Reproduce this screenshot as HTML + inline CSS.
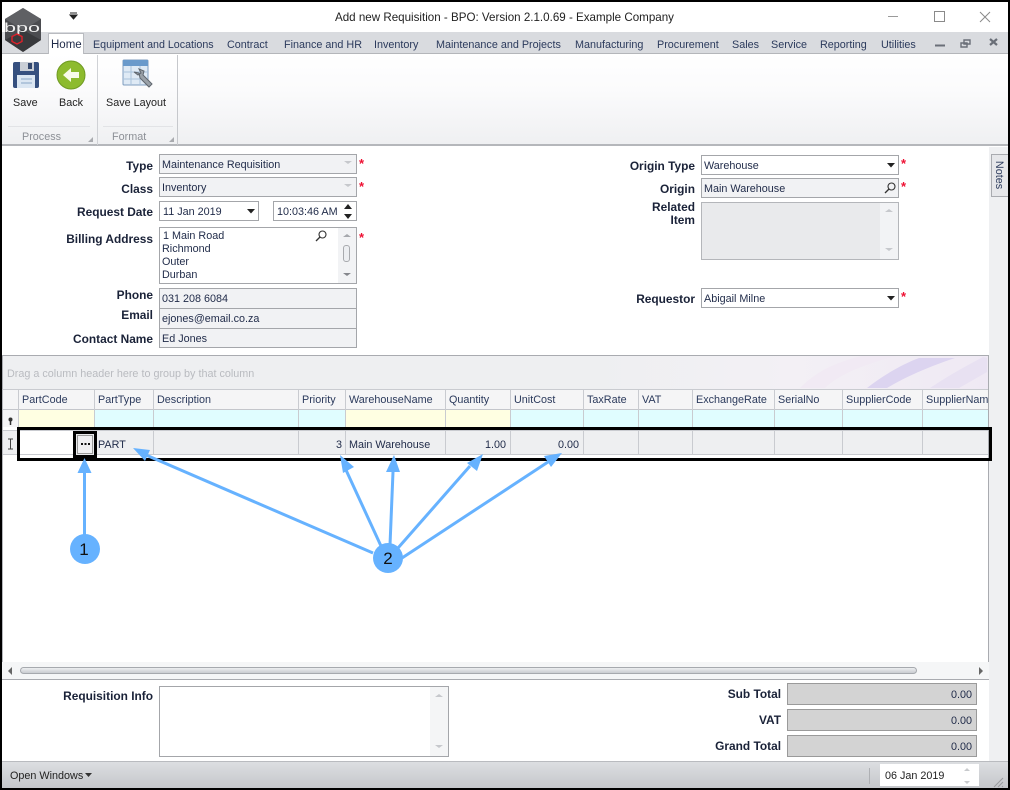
<!DOCTYPE html>
<html><head><meta charset="utf-8"><style>
html,body{margin:0;padding:0;background:#fff}
#p{position:relative;width:1010px;height:790px;overflow:hidden;background:#fff;font-family:"Liberation Sans",sans-serif;font-size:10.8px;color:#1f2a48}
#p div,#p span{position:absolute;box-sizing:border-box}
#p span{white-space:nowrap;line-height:14px;margin-top:1px}
.b{font-weight:bold;color:#1a2238;font-size:11.9px}
.r{text-align:right}
.f{border:1px solid #a4a6aa;background:#f1f2f4}
.w{background:#fff}
#p span.st{color:#ee1133;font-weight:bold;font-size:13px;margin-top:0}
.h{color:#2b3a5c}
.g{color:#8d9096}
.vl{top:389px;width:1px;background:#c9cbd0;height:66px}
svg{position:absolute;left:0;top:0}
</style></head><body><div id="p">
<div style="left:0;top:32px;width:1010px;height:22px;background:#d9dbdf;border-bottom:1px solid #b4b6ba"></div>
<div style="left:48px;top:33px;width:36px;height:22px;background:#fff;border:1px solid #b9bbc0;border-bottom:none"></div>
<div style="left:0;top:54px;width:1010px;height:92px;background:linear-gradient(#fff,#fbfbfc 40%,#eff0f2);border-bottom:2px solid #b5b7bb"></div>
<div style="left:97px;top:55px;width:1px;height:90px;background:#d0d2d6"></div>
<div style="left:177px;top:55px;width:1px;height:90px;background:#c6c8cc"></div>
<div style="left:8px;top:126px;width:82px;height:1px;background:#e2e3e6"></div>
<div style="left:103px;top:126px;width:70px;height:1px;background:#e2e3e6"></div>
<div style="left:989px;top:147px;width:20px;height:615px;background:#eff0f2"></div>
<div style="left:991px;top:154px;width:17px;height:43px;background:#e6e7ea;border:1px solid #a9abb0;border-right:none"></div>
<span style="left:976px;top:167px;transform:rotate(90deg);width:46px;text-align:center;color:#2b3a5c">Notes</span>

<span style="left:335px;top:10px;font-size:11.6px;color:#222">Add new Requisition - BPO: Version 2.1.0.69 - Example Company</span>
<span style="left:51px;top:37px;color:#1f2a48;font-size:11.5px">Home</span>
<span class="h" style="left:93px;top:37px;font-size:10.7px">Equipment and Locations</span>
<span class="h" style="left:227px;top:37px">Contract</span>
<span class="h" style="left:284px;top:37px">Finance and HR</span>
<span class="h" style="left:374px;top:37px">Inventory</span>
<span class="h" style="left:436px;top:37px">Maintenance and Projects</span>
<span class="h" style="left:575px;top:37px">Manufacturing</span>
<span class="h" style="left:657px;top:37px">Procurement</span>
<span class="h" style="left:732px;top:37px">Sales</span>
<span class="h" style="left:771px;top:37px">Service</span>
<span class="h" style="left:820px;top:37px">Reporting</span>
<span class="h" style="left:881px;top:37px">Utilities</span>

<span style="left:13px;top:95px;color:#222">Save</span>
<span style="left:59px;top:95px;color:#222">Back</span>
<span style="left:106px;top:95px;color:#222">Save Layout</span>
<span class="g" style="left:22px;top:129px">Process</span>
<span class="g" style="left:112px;top:129px">Format</span>

<span class="b r" style="right:857px;top:158px">Type</span>
<span class="b r" style="right:857px;top:181px">Class</span>
<span class="b r" style="right:857px;top:204px">Request Date</span>
<span class="b r" style="right:857px;top:231px">Billing Address</span>
<span class="b r" style="right:857px;top:287px">Phone</span>
<span class="b r" style="right:857px;top:307px">Email</span>
<span class="b r" style="right:857px;top:331px">Contact Name</span>

<div class="f" style="left:159px;top:154px;width:198px;height:20px"></div>
<span style="left:162px;top:157px">Maintenance Requisition</span>
<div class="f" style="left:159px;top:177px;width:198px;height:20px"></div>
<span style="left:162px;top:180px">Inventory</span>
<div class="f w" style="left:159px;top:201px;width:100px;height:20px"></div>
<span style="left:163px;top:204px">11 Jan 2019</span>
<div class="f w" style="left:273px;top:201px;width:84px;height:20px"></div>
<span style="left:277px;top:204px">10:03:46 AM</span>
<div style="left:337px;top:203px;width:19px;height:17px;background:#fff"></div>
<div class="f w" style="left:159px;top:227px;width:198px;height:57px"></div>
<div style="left:338px;top:228px;width:18px;height:55px;background:#f2f3f5"></div>
<span style="left:163px;top:229px;line-height:13px">1 Main Road</span>
<span style="left:162px;top:242px;line-height:13px">Richmond</span>
<span style="left:162px;top:255px;line-height:13px">Outer</span>
<span style="left:162px;top:268px;line-height:13px">Durban</span>
<div class="f" style="left:159px;top:288px;width:198px;height:21px"></div>
<span style="left:162px;top:291px">031 208 6084</span>
<div class="f" style="left:159px;top:308px;width:198px;height:21px"></div>
<span style="left:162px;top:311px">ejones@email.co.za</span>
<div class="f" style="left:159px;top:328px;width:198px;height:20px"></div>
<span style="left:162px;top:331px">Ed Jones</span>
<div style="left:343px;top:245px;width:7px;height:17px;border:1px solid #a8aaae;border-radius:3px;background:#eceef1"></div>

<span class="st" style="left:359px;top:157px">*</span>
<span class="st" style="left:359px;top:180px">*</span>
<span class="st" style="left:359px;top:231px">*</span>
<span class="st" style="left:901px;top:157px">*</span>
<span class="st" style="left:901px;top:180px">*</span>
<span class="st" style="left:901px;top:290px">*</span>

<span class="b r" style="right:315px;top:158px">Origin Type</span>
<span class="b r" style="right:315px;top:181px">Origin</span>
<span class="b r" style="right:315px;top:199px">Related</span>
<span class="b r" style="right:315px;top:212px">Item</span>
<span class="b r" style="right:315px;top:291px">Requestor</span>
<div class="f w" style="left:701px;top:155px;width:198px;height:20px"></div>
<span style="left:704px;top:158px">Warehouse</span>
<div class="f" style="left:701px;top:178px;width:198px;height:20px"></div>
<span style="left:704px;top:181px">Main Warehouse</span>
<div style="left:701px;top:202px;width:198px;height:58px;background:#e9eaec;border:1px solid #b4b6ba"></div>
<div style="left:880px;top:203px;width:18px;height:56px;background:#f2f3f5"></div>
<div class="f w" style="left:701px;top:288px;width:198px;height:20px"></div>
<span style="left:704px;top:291px">Abigail Milne</span>

<div style="left:2px;top:355px;width:987px;height:34px;background:linear-gradient(90deg,#eeeff1 0,#eeeff1 60%,#f3f0f5 80%,#efe9f4 100%);border:1px solid #a9abb0;border-bottom:none"></div>
<span style="left:7px;top:366px;color:#b9bbc0">Drag a column header here to group by that column</span>
<div style="left:2px;top:389px;width:987px;height:21px;background:#f5f5f6;border-top:1px solid #c9cbd0;border-bottom:1px solid #c4c6cb"></div>
<div style="left:18px;top:410px;width:76px;height:17px;background:#ffffe2"></div>
<div style="left:94px;top:410px;width:895px;height:17px;background:#e0fdff"></div>
<div style="left:345px;top:410px;width:100px;height:17px;background:#ffffe2"></div>
<div style="left:445px;top:410px;width:65px;height:17px;background:#ffffe2"></div>
<div style="left:2px;top:410px;width:16px;height:17px;background:#f5f5f6"></div>
<div style="left:2px;top:430px;width:987px;height:25px;background:#eeeff1;border-top:1px solid #c9cbd0;border-bottom:1px solid #c9cbd0"></div>
<div style="left:18px;top:431px;width:59px;height:23px;background:#fff"></div>
<div class="vl" style="left:18px"></div><div class="vl" style="left:94px"></div><div class="vl" style="left:153px"></div><div class="vl" style="left:298px"></div><div class="vl" style="left:345px"></div><div class="vl" style="left:445px"></div><div class="vl" style="left:510px"></div><div class="vl" style="left:583px"></div><div class="vl" style="left:638px"></div><div class="vl" style="left:692px"></div><div class="vl" style="left:774px"></div><div class="vl" style="left:842px"></div><div class="vl" style="left:922px"></div>
<span class="h" style="left:22px;top:392px">PartCode</span>
<span class="h" style="left:98px;top:392px">PartType</span>
<span class="h" style="left:157px;top:392px">Description</span>
<span class="h" style="left:302px;top:392px">Priority</span>
<span class="h" style="left:349px;top:392px">WarehouseName</span>
<span class="h" style="left:449px;top:392px">Quantity</span>
<span class="h" style="left:514px;top:392px">UnitCost</span>
<span class="h" style="left:587px;top:392px">TaxRate</span>
<span class="h" style="left:642px;top:392px">VAT</span>
<span class="h" style="left:696px;top:392px">ExchangeRate</span>
<span class="h" style="left:778px;top:392px">SerialNo</span>
<span class="h" style="left:846px;top:392px">SupplierCode</span>
<div style="left:923px;top:390px;width:65px;height:19px;overflow:hidden"><span class="h" style="left:3px;top:2px">SupplierName</span></div>
<span style="left:98px;top:437px">PART</span>
<span class="r" style="right:668px;top:437px">3</span>
<span style="left:349px;top:437px">Main Warehouse</span>
<span class="r" style="right:504px;top:437px">1.00</span>
<span class="r" style="right:431px;top:437px">0.00</span>
<div style="left:988px;top:389px;width:1px;height:291px;background:#a9abb0"></div>
<div style="left:2px;top:389px;width:1px;height:291px;background:#b5b7bb"></div>

<div style="left:2px;top:662px;width:987px;height:18px;background:#f5f6f7;border-bottom:1px solid #a9abb0"></div>
<div style="left:20px;top:667px;width:897px;height:7px;background:linear-gradient(#eceef0,#c9ccd1);border:1px solid #a6a9ae;border-radius:4px"></div>

<span class="b r" style="right:857px;top:688px">Requisition Info</span>
<div class="f w" style="left:159px;top:686px;width:290px;height:71px"></div>
<div style="left:430px;top:687px;width:18px;height:69px;background:#f4f5f6"></div>
<span class="b r" style="right:229px;top:686px">Sub Total</span>
<span class="b r" style="right:229px;top:712px">VAT</span>
<span class="b r" style="right:229px;top:738px">Grand Total</span>
<div style="left:787px;top:683px;width:190px;height:22px;background:#d3d3d3;border:1px solid #9a9a9a"></div>
<div style="left:787px;top:709px;width:190px;height:22px;background:#d3d3d3;border:1px solid #9a9a9a"></div>
<div style="left:787px;top:735px;width:190px;height:22px;background:#d3d3d3;border:1px solid #9a9a9a"></div>
<span class="r" style="right:38px;top:687px">0.00</span>
<span class="r" style="right:38px;top:713px">0.00</span>
<span class="r" style="right:38px;top:739px">0.00</span>

<div style="left:0;top:761px;width:1010px;height:29px;background:linear-gradient(#dcdee1,#c3c5c9);border-top:1px solid #b9bbbf"></div>
<span style="left:10px;top:768px;color:#222">Open Windows</span>
<div style="left:869px;top:768px;width:1px;height:16px;background:#aeb0b4"></div>
<div style="left:880px;top:764px;width:99px;height:22px;background:#fff"></div>
<span style="left:885px;top:768px;color:#222">06 Jan 2019</span>

<svg width="1010" height="790" viewBox="0 0 1010 790">
<polygon points="23,8 41,19 41,40 23,52 5,40 5,19" fill="#4b4c50"/>
<polygon points="23,8 41,19 23,30 5,19" fill="#5f6064"/>
<polygon points="5,40 23,30 41,40 23,52" fill="#38393c"/>
<text x="4" y="32" font-family="Liberation Sans" font-size="13" fill="#f0f0f0" textLength="36" lengthAdjust="spacingAndGlyphs">bpo</text>
<polygon points="17,34 22,36.500 22,41.500 17,44 12,41.500 12,36.500" fill="#3a3a3c" stroke="#e0202a" stroke-width="1.400"/>

<path d="M70 13h7M70 15h7l-3.500 4z" fill="#222" stroke="#222" stroke-width="1"/>

<path d="M888 16.500h10" stroke="#9a9a9a"/>
<rect x="934.500" y="11.500" width="10" height="10" fill="none" stroke="#8a8a8a"/>
<path d="M980 12l10 10M990 12l-10 10" stroke="#8a8a8a"/>
<path d="M935 45.500h10" stroke="#6a6f78" stroke-width="2"/>
<path d="M964 40h6v4h-6zM961 43h6v4h-6z" fill="#d9dbdf" stroke="#6a6f78" stroke-width="1.400"/>
<path d="M990 39l7 6M997 39l-7 6" stroke="#6a6f78" stroke-width="2.200"/>

<rect x="13" y="62" width="26" height="26" rx="2" fill="#36507f"/>
<rect x="20" y="62" width="14" height="9" fill="#c9ced6"/><rect x="28" y="63" width="4" height="6" fill="#33476e"/>
<rect x="17" y="75" width="18" height="13" fill="#dbe6f2"/><path d="M21 79h11M21 83h11" stroke="#8aa6c5"/>

<circle cx="71" cy="75" r="14" fill="#8dbb2e" stroke="#6f9a22"/>
<path d="M63 75l8-7v4h8v6h-8v4z" fill="#f8fbe9"/>

<rect x="123" y="60" width="25" height="25" rx="1" fill="#dfeaf5" stroke="#7e9cbe"/>
<rect x="123" y="60" width="25" height="6" fill="#6a9acb"/>
<path d="M131 66v19M140 66v19M123 72h25M123 79h25" stroke="#a9c3dc"/>
<path d="M134 72l5 1 1 5 9 9 3-3-9-9 1-4-5-2 2 4-3 2z" fill="#9aa1a8" stroke="#5f666e" stroke-width="1"/>

<path d="M93 137v5h-5z" fill="#a9abaf"/><path d="M174 137v5h-5z" fill="#a9abaf"/>

<path d="M344 161l4 3 4-3z" fill="#c6c8cc"/><path d="M344 184l4 3 4-3z" fill="#c6c8cc"/>
<path d="M247 209h8l-4 4.500z" fill="#222"/>
<path d="M344 209l4-5 4 5zM344 214l4 5 4-5z" fill="#222"/>
<circle cx="322.500" cy="234.500" r="3.500" fill="none" stroke="#333" stroke-width="1.100"/><path d="M320 237l-4 4" stroke="#333" stroke-width="1.300"/>
<path d="M343 237l4-3 4 3z" fill="#a6a8ad"/><path d="M343 273l4 3 4-3z" fill="#85878c"/>
<path d="M887 163h8l-4 4.500z" fill="#222"/><path d="M887 296h8l-4 4.500z" fill="#222"/>
<circle cx="891.500" cy="186.500" r="3.500" fill="none" stroke="#333" stroke-width="1.100"/><path d="M889 189l-4 4" stroke="#333" stroke-width="1.300"/>
<path d="M885 212l4-3 4 3z" fill="#c6c8cc"/><path d="M885 248l4 3 4-3z" fill="#c6c8cc"/>
<path d="M435 697l4-3 4 3z" fill="#c6c8cc"/><path d="M435 745l4 3 4-3z" fill="#c6c8cc"/>

<path d="M867 388c18-14 36-24 52-30h36c-24 8-48 18-68 30z" fill="#dcd4f0"/>
<path d="M930 388c18-12 36-22 53-31l4 1v14l-28 16z" fill="#e8e1f2"/>
<path d="M800 388c12-12 28-24 62-32h35c-34 8-60 20-72 32z" fill="#f1eaf4"/>

<circle cx="10.500" cy="419.500" r="2" fill="#333"/><path d="M10.500 421v4" stroke="#333" stroke-width="1.500"/>
<path d="M8 439h5M8 449h5M10.500 439v10" stroke="#444" fill="none"/>

<rect x="18.500" y="428.500" width="972" height="31" fill="none" stroke="#000" stroke-width="3"/>
<rect x="74.500" y="432.500" width="21" height="24" fill="#e9eaec" stroke="#000" stroke-width="3"/>
<rect x="77.500" y="435.500" width="15" height="18" fill="#f0f0f2" stroke="#9a9a9a"/>
<path d="M81 444h2M84.500 444h2M88 444h2" stroke="#111" stroke-width="2"/>

<path d="M12 667v8L8 671z" fill="#666"/>
<path d="M979 667v8l4-4z" fill="#666"/>

<path d="M85 773h7l-3.500 4z" fill="#333"/>
<path d="M970 771l-3-3-3 3zM964 781l3 3 3-3z" fill="#c8cacd"/>
<path d="M994 787l9-9M998 787l5-5M1002 787l1-1" stroke="#9a9ca0"/>

<g stroke="#66b2ff" stroke-width="3" fill="#66b2ff">
<path d="M84.500 536V470"/>
<path d="M84.500 458l-7 15h14z" stroke="none"/>
<path d="M373 553L146 455"/>
<path d="M133 448l17 2-5 11z" stroke="none"/>
<path d="M381 546L346 470"/>
<path d="M340 455l14 12-11 6z" stroke="none"/>
<path d="M390 545L393 472"/>
<path d="M394 455l6 17h-14z" stroke="none"/>
<path d="M398 548L470 466"/>
<path d="M483 454l-6 17-10-8z" stroke="none"/>
<path d="M402 558L548 462"/>
<path d="M562 453l-11 14-7-11z" stroke="none"/>
</g>
<circle cx="85" cy="549" r="15" fill="#66b2ff"/>
<circle cx="388" cy="558" r="15" fill="#66b2ff"/>
<text x="84" y="555" text-anchor="middle" font-family="Liberation Sans" font-size="17" fill="#111">1</text>
<text x="388" y="564" text-anchor="middle" font-family="Liberation Sans" font-size="17" fill="#111">2</text>
</svg>
<div style="left:0;top:0;width:1010px;height:2px;background:#000"></div>
<div style="left:0;top:788px;width:1010px;height:2px;background:#000"></div>
<div style="left:0;top:0;width:2px;height:790px;background:#000"></div>
<div style="left:1008px;top:0;width:2px;height:790px;background:#000"></div>
</div></body></html>
